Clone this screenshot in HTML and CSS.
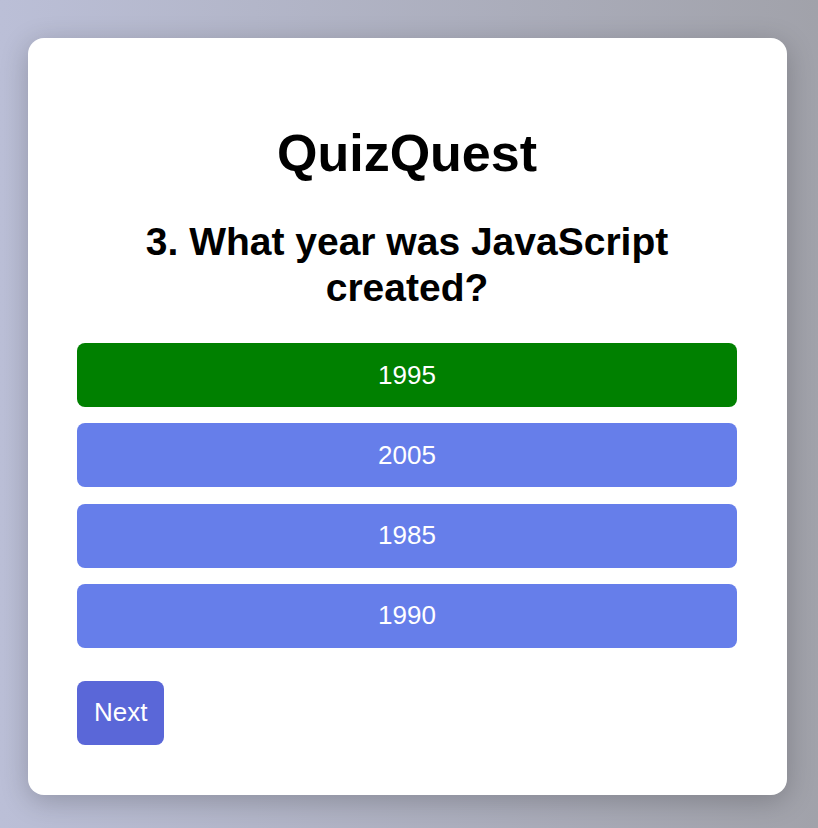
FILE: index.html
```html
<!DOCTYPE html>
<html lang="en">
<head>
<meta charset="utf-8">
<title>QuizQuest</title>
<link rel="stylesheet" href="styles.css">
</head>
<body>
<div class="page">
  <main class="card">
    <h1 class="title">QuizQuest</h1>
    <h2 class="question">3. What year was JavaScript created?</h2>
    <div class="options">
      <button class="option correct">1995</button>
      <button class="option">2005</button>
      <button class="option">1985</button>
      <button class="option">1990</button>
    </div>
    <button class="next">Next</button>
  </main>
</div>
</body>
</html>
```

FILE: styles.css
```css
html, body {
  height: 100%;
}
body {
  margin: 0;
  font-family: "Liberation Sans", Arial, sans-serif;
  background: linear-gradient(to right, #bbbfd7, #a1a2aa);
}
.page {
  padding: 38px 0 0 28px;
}
.card {
  box-sizing: border-box;
  width: 759px;
  padding: 50px 50px 50px 49px;
  background: #ffffff;
  border-radius: 16px;
  box-shadow: 0 6px 28px rgba(0, 0, 0, 0.22);
  text-align: center;
}
.title {
  font-size: 52px;
  font-weight: bold;
  margin: 35px 0;
  color: #000;
}
.question {
  font-size: 39px;
  line-height: 46px;
  font-weight: bold;
  margin: 36px 0 32px;
  color: #000;
}
.options {
  display: flex;
  flex-direction: column;
  gap: 16.3px;
}
.option {
  display: block;
  width: 100%;
  height: 64px;
  border: none;
  border-radius: 8px;
  background: #667eea;
  color: #ffffff;
  font-family: "Liberation Sans", Arial, sans-serif;
  font-size: 26px;
  padding: 0;
}
.option.correct {
  background: #008000;
}
.next {
  display: block;
  margin-top: 33px;
  height: 64px;
  padding: 0 17px;
  border: none;
  border-radius: 8px;
  background: #5a67d8;
  color: #ffffff;
  font-family: "Liberation Sans", Arial, sans-serif;
  font-size: 26px;
}
```
